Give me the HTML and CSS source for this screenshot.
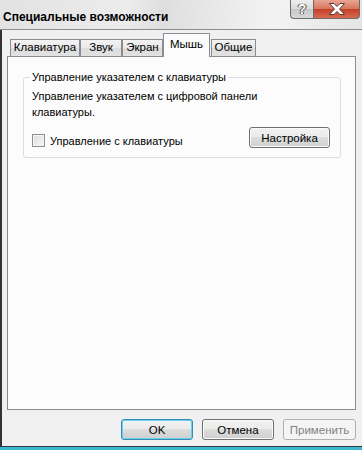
FILE: index.html
```html
<!DOCTYPE html>
<html lang="ru">
<head>
  <meta charset="UTF-8" />
  <title>Специальные возможности</title>
  <link rel="stylesheet" href="styles.css">
</head>
<body>
  <div class="window">
    <div class="titlebar">
      <span class="title">Специальные возможности</span>
      <div class="caption-buttons">
        <div class="cap-btn help"><span>?</span></div>
        <div class="cap-btn close">
          <svg width="18" height="12" viewBox="0 0 18 12">
            <path d="M1.5 0.5 H6 L9 3.5 L12 0.5 H16.5 L11.5 6 L16.5 11.5 H12 L9 8.5 L6 11.5 H1.5 L6.5 6 Z" fill="#fff" stroke="#5a3a33" stroke-width="1"/>
          </svg>
        </div>
      </div>
    </div>

    <div class="dialog-body">
      <div class="tabs">
        <div class="tab t1">Клавиатура</div>
        <div class="tab t2">Звук</div>
        <div class="tab t3">Экран</div>
        <div class="tab active">Мышь</div>
        <div class="tab t5">Общие</div>
      </div>

      <div class="panel">
        <fieldset class="group">
          <legend>Управление указателем с клавиатуры</legend>
          <p class="desc">Управление указателем с цифровой панели<br>клавиатуры.</p>
          <div class="group-row">
            <label class="check"><span class="box"></span>Управление с клавиатуры</label>
            <button class="btn">Настройка</button>
          </div>
        </fieldset>
      </div>

      <div class="buttons">
        <button class="btn default">OK</button>
        <button class="btn">Отмена</button>
        <button class="btn" disabled>Применить</button>
      </div>
    </div>
    <div class="frame-bottom"></div>
  </div>
</body>
</html>
```

FILE: styles.css
```css
body {
  margin: 0;
  padding: 0;
  font-family: "Liberation Sans", Arial, sans-serif;
  font-size: 11px;
  color: #000;
}
.window {
  width: 362px;
  height: 450px;
  overflow: hidden;
}
.titlebar {
  height: 29px;
  border-bottom: 1px solid #8c8c8c;
  background: linear-gradient(100deg, #e2e2e2 0%, #ececec 35%, #dedede 45%, #e9e9e9 60%, #f3f3f3 75%, #e4e4e4 100%);
  display: flex;
  align-items: flex-start;
  justify-content: space-between;
}
.title {
  font-weight: bold;
  font-size: 12px;
  padding: 10px 0 0 3px;
}
.caption-buttons {
  display: flex;
  margin-right: 2px;
}
.cap-btn {
  height: 19px;
  box-sizing: border-box;
  border: 1px solid #6b6b6b;
  border-top: none;
  display: flex;
  align-items: center;
  justify-content: center;
}
.help {
  width: 23px;
  border-radius: 0 0 0 4px;
  border-right: none;
  background: linear-gradient(#eeeeee, #dadada 50%, #c4c6c8 51%, #d6d8da);
}
.help span {
  font-weight: bold;
  font-size: 14px;
  color: #fff;
  text-shadow: 0 0 1px #333, 0 0 1px #333, 1px 0 0 #555, -1px 0 0 #555;
}
.close {
  width: 47px;
  border-radius: 0 0 4px 0;
  background: linear-gradient(#e9a593, #d8775f 48%, #c4402a 52%, #d86a4e);
}
.dialog-body {
  height: 416px;
  box-sizing: border-box;
  border-left: 2px solid #333;
  background: #f0f0f0;
  padding: 3px 6px 0 5px;
}
.tabs {
  display: flex;
  align-items: flex-end;
  height: 23px;
  padding-left: 3px;
}
.tab {
  height: 17px;
  box-sizing: border-box;
  border: 1px solid #898c95;
  border-bottom: none;
  background: linear-gradient(#f3f3f3, #e8e8e8 50%, #dcdcdc 51%, #e2e2e2);
  line-height: 14px;
  font-size: 11.5px;
  text-align: center;
}
.t1 { width: 70px; }
.t2 { width: 42px; }
.t3 { width: 41px; }
.t5 { width: 45px; margin-left: 1px; }
.tab.active {
  width: 47px;
  height: 24px;
  margin-bottom: -1px;
  background: #fcfcfc;
  padding-top: 3px;
  position: relative;
  z-index: 1;
}
.panel {
  height: 354px;
  box-sizing: border-box;
  border: 1px solid #898c95;
  background: #fcfcfc;
  padding: 13px 14px 0 15px;
}
.group {
  margin: 0;
  width: 318px;
  box-sizing: border-box;
  border: 1px solid #d5dfe5;
  border-radius: 3px;
  padding: 4px 10px 9px 8px;
}
.group legend {
  padding: 0 2px;
  margin-left: -2px;
  line-height: 14px;
}
.desc {
  margin: 0 0 7px 0;
  line-height: 16px;
}
.group-row {
  display: flex;
  align-items: flex-end;
  justify-content: space-between;
}
.check {
  display: flex;
  align-items: center;
  margin-bottom: 1px;
}
.box {
  width: 13px;
  height: 13px;
  box-sizing: border-box;
  border: 1px solid #8f8f8f;
  background: linear-gradient(135deg, #dcdcdc, #f8f8f8);
  box-shadow: inset 0 0 0 1px #f4f4f4;
  margin-right: 5px;
}
.btn {
  font-family: inherit;
  font-size: 11.5px;
  height: 21px;
  width: 81px;
  box-sizing: border-box;
  border: 1px solid #707070;
  border-radius: 3px;
  background: linear-gradient(#f2f2f2, #ebebeb 45%, #dddddd 50%, #cfcfcf);
  box-shadow: inset 0 0 0 1px #fbfbfb;
  color: #000;
  padding: 0;
}
.buttons {
  display: flex;
  justify-content: flex-end;
  gap: 9px;
  margin-top: 9px;
}
.buttons .btn {
  width: 72px;
}
.buttons .btn:last-child {
  width: 73px;
}
.btn.default {
  border-color: #3c8ab1;
  box-shadow: inset 0 0 0 1px #5fd3ef;
}
.btn:disabled {
  border-color: #adb2b5;
  background: #f4f4f4;
  box-shadow: none;
  color: #838383;
}
.frame-bottom {
  height: 3px;
  border-top: 1px solid #2e3d40;
  background: #3cb6cc;
}
```
